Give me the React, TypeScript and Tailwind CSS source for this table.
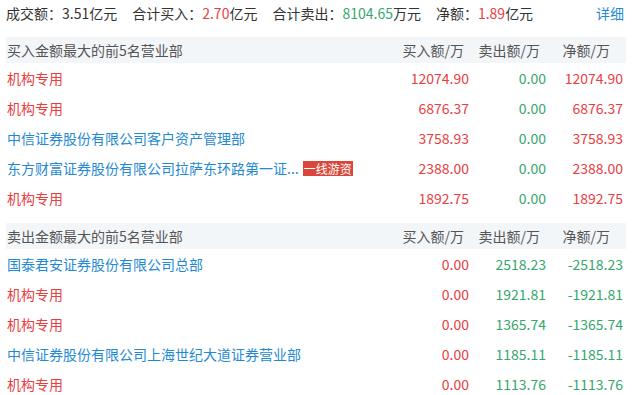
import React from 'react';

const RED = 'text-[#e8403f]';
const GREEN = 'text-[#36a66d]';
const BLUE = 'text-[#1f8ad2]';

type Row = { name: string; org?: boolean; badge?: string; buy: string; sell: string; net: string };

const BUY_ROWS: Row[] = [
  { name: '机构专用', org: true, buy: '12074.90', sell: '0.00', net: '12074.90' },
  { name: '机构专用', org: true, buy: '6876.37', sell: '0.00', net: '6876.37' },
  { name: '中信证券股份有限公司客户资产管理部', buy: '3758.93', sell: '0.00', net: '3758.93' },
  { name: '东方财富证券股份有限公司拉萨东环路第一证...', badge: '一线游资', buy: '2388.00', sell: '0.00', net: '2388.00' },
  { name: '机构专用', org: true, buy: '1892.75', sell: '0.00', net: '1892.75' },
];

const SELL_ROWS: Row[] = [
  { name: '国泰君安证券股份有限公司总部', buy: '0.00', sell: '2518.23', net: '-2518.23' },
  { name: '机构专用', org: true, buy: '0.00', sell: '1921.81', net: '-1921.81' },
  { name: '机构专用', org: true, buy: '0.00', sell: '1365.74', net: '-1365.74' },
  { name: '中信证券股份有限公司上海世纪大道证券营业部', buy: '0.00', sell: '1185.11', net: '-1185.11' },
  { name: '机构专用', org: true, buy: '0.00', sell: '1113.76', net: '-1113.76' },
];

const grid = 'grid grid-cols-[1fr_90px_77px_80px] items-center';

function Section({ title, rows }: { title: string; rows: Row[] }) {
  return (
    <div>
      <div className={`${grid} h-[26px] bg-[#f3f6f9] text-[#555]`}>
        <div className="pl-[1px]">{title}</div>
        <div className="text-right pr-[5px]">买入额/万</div>
        <div className="text-right pr-[6px]">卖出额/万</div>
        <div className="text-right pr-[16px]">净额/万</div>
      </div>
      {rows.map((r, i) => (
        <div key={i} className={`${grid} h-[30px]`}>
          <div className="pl-[1px] flex items-center gap-[4px] whitespace-nowrap">
            <span className={r.org ? RED : BLUE}>{r.name}</span>
            {r.badge && (
              <span className="bg-[#d9473a] text-white text-[12px] leading-[15px] px-[1px]">{r.badge}</span>
            )}
          </div>
          <div className={`text-right ${RED}`}>{r.buy}</div>
          <div className={`text-right ${GREEN}`}>{r.sell}</div>
          <div className={`text-right pr-[3px] ${r.net.startsWith('-') ? GREEN : RED}`}>{r.net}</div>
        </div>
      ))}
    </div>
  );
}

export default function App() {
  return (
    <div
      className="w-[636px] h-[395px] overflow-hidden bg-white pl-[6px] pr-[10px] text-[14px] text-[#333]"
      style={{ fontFamily: '"Microsoft YaHei", "Noto Sans CJK SC", sans-serif' }}
    >
      <div className="flex items-center h-[26px] pr-[2px]">
        <div className="flex items-center gap-[15px]">
          <span>成交额：3.51亿元</span>
          <span>
            合计买入：<span className={RED}>2.70</span>亿元
          </span>
          <span>
            合计卖出：<span className={GREEN}>8104.65</span>万元
          </span>
          <span>
            净额：<span className={RED}>1.89</span>亿元
          </span>
        </div>
        <span className={`ml-auto ${BLUE}`}>详细</span>
      </div>
      <div className="mt-[11px]">
        <Section title="买入金额最大的前5名营业部" rows={BUY_ROWS} />
      </div>
      <div className="mt-[10px]">
        <Section title="卖出金额最大的前5名营业部" rows={SELL_ROWS} />
      </div>
    </div>
  );
}
